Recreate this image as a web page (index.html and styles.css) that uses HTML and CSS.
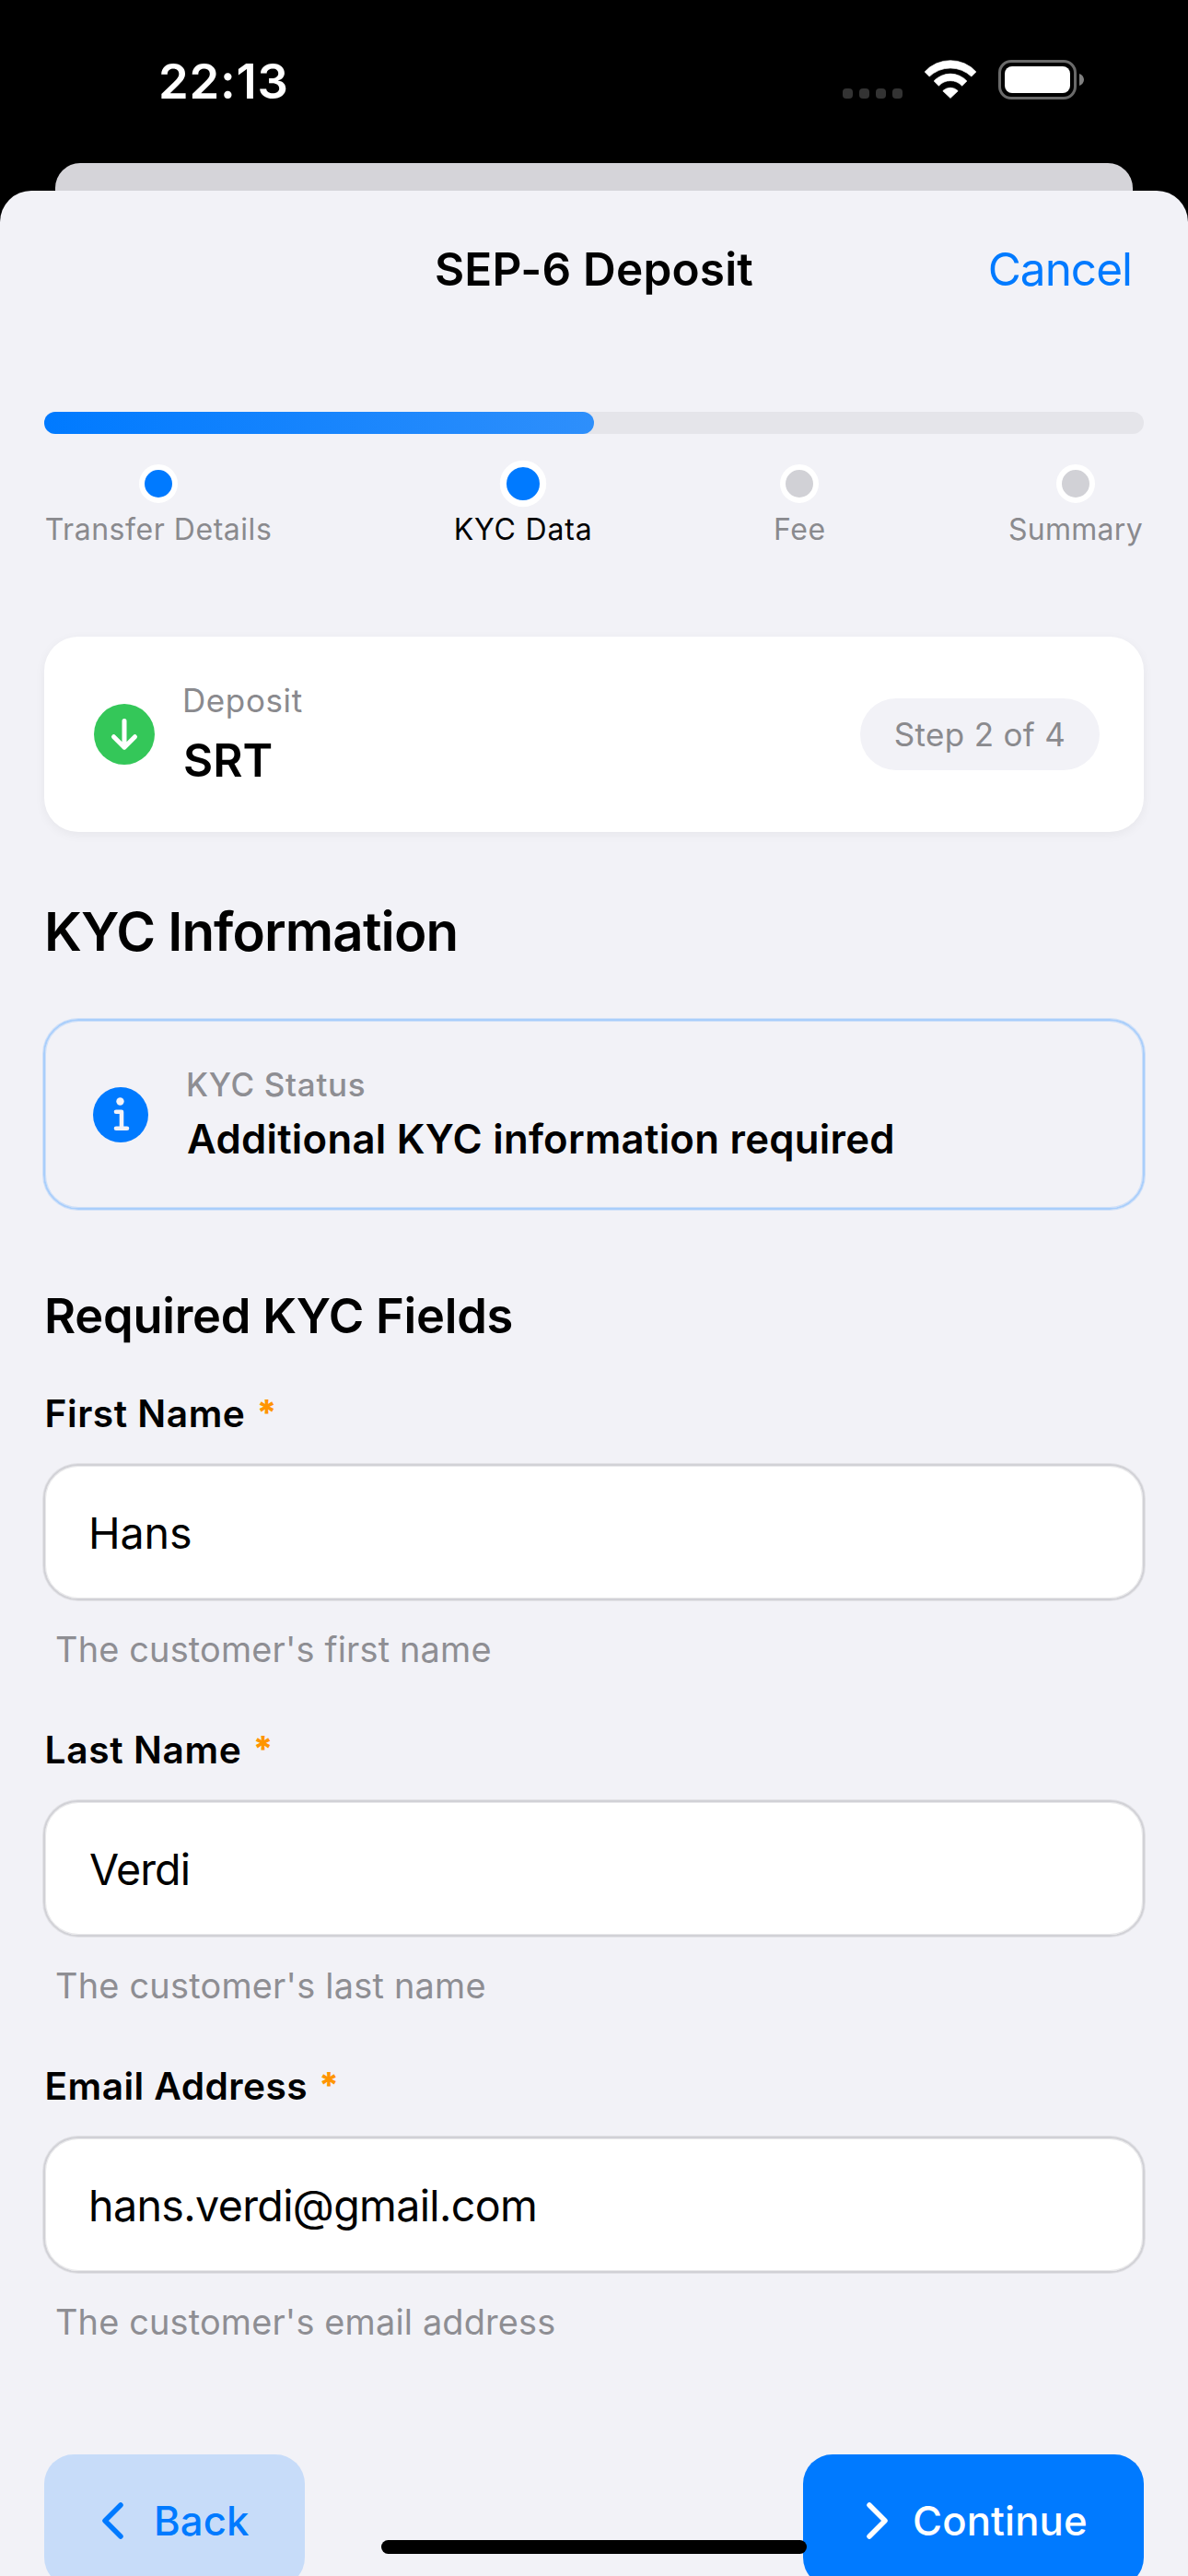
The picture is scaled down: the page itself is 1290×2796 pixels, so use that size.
FILE: index.html
```html
<!DOCTYPE html>
<html lang="en">
<head>
<meta charset="utf-8">
<title>SEP-6 Deposit</title>
<link rel="stylesheet" href="styles.css">
</head>
<body>
<div class="screen">
  <header class="status-bar">
    <span class="time">22:13</span>
    <div class="indicators">
      <div class="signal"><i></i><i></i><i></i><i></i></div>
      <svg class="wifi" viewBox="310 44 175 128" fill="#fff" stroke="#fff" stroke-width="2" stroke-linejoin="round">
        <path d="M312.500 83.500A115 115 0 0 1 482.500 83.500L467 99A101 101 0 0 0 328 99Z"/>
        <path d="M343 114A74 74 0 0 1 452 114L436 130A52 52 0 0 0 359 130Z"/>
        <path d="M372.500 147A34 34 0 0 1 422.500 147L397.500 170.500Z"/>
      </svg>
      <div class="battery">
        <div class="battery-shell"><div class="battery-level"></div></div>
        <svg class="battery-nub" viewBox="0 0 5 13"><path d="M0 0C3 1.200 5 3.500 5 6.500S3 11.800 0 13Z" fill="#808080"/></svg>
      </div>
    </div>
  </header>

  <div class="back-sheet"></div>

  <main class="sheet">
    <nav class="nav">
      <h1 class="nav-title">SEP-6 Deposit</h1>
      <a class="nav-cancel">Cancel</a>
    </nav>

    <div class="content">
      <div class="progress"><div class="progress-fill"></div></div>
      <ol class="steps">
        <li class="step step-details done"><span class="dot"></span><span class="step-label">Transfer Details</span></li>
        <li class="step step-kyc current"><span class="dot"></span><span class="step-label">KYC Data</span></li>
        <li class="step step-fee"><span class="dot"></span><span class="step-label">Fee</span></li>
        <li class="step step-summary"><span class="dot"></span><span class="step-label">Summary</span></li>
      </ol>

      <section class="card">
        <svg class="deposit-icon" viewBox="0 0 66 66">
          <circle cx="33" cy="33" r="33" fill="#34c759"/>
          <path d="M33 18.500V46M21.500 35.700L33 47.200L44.500 35.700" fill="none" stroke="#fff" stroke-width="5" stroke-linecap="round" stroke-linejoin="round"/>
        </svg>
        <div class="card-text">
          <span class="card-kind">Deposit</span>
          <span class="card-asset">SRT</span>
        </div>
        <span class="pill">Step 2 of 4</span>
      </section>

      <h2 class="title">KYC Information</h2>

      <section class="status-box">
        <svg class="info-icon" viewBox="0 0 60 60">
          <circle cx="30" cy="30" r="30" fill="#007aff"/>
          <circle cx="29.500" cy="15.500" r="4.200" fill="#f2f2f7"/>
          <path d="M25 26.800H31V44.500M25 44.700H37" fill="none" stroke="#f2f2f7" stroke-width="4.600" stroke-linecap="round" stroke-linejoin="round"/>
        </svg>
        <div class="status-text">
          <span class="status-caption">KYC Status</span>
          <span class="status-value">Additional KYC information required</span>
        </div>
      </section>

      <h3 class="subtitle">Required KYC Fields</h3>

      <form class="fields">
        <div class="field">
          <label class="label first">First Name<span class="req">*</span></label>
          <div class="input">Hans</div>
          <p class="hint hint-first">The customer's first name</p>
        </div>
        <div class="field">
          <label class="label last">Last Name<span class="req">*</span></label>
          <div class="input verdi">Verdi</div>
          <p class="hint hint-last">The customer's last name</p>
        </div>
        <div class="field">
          <label class="label email">Email Address<span class="req">*</span></label>
          <div class="input mail">hans.verdi@gmail.com</div>
          <p class="hint hint-email">The customer's email address</p>
        </div>
      </form>

      <div class="actions">
        <button class="btn btn-back">
          <svg class="chevron" viewBox="0 0 23 40"><path d="M20 3L3 20L20 37"/></svg>
          <span>Back</span>
        </button>
        <button class="btn btn-continue">
          <svg class="chevron" viewBox="0 0 23 40"><path d="M3 3L20 20L3 37"/></svg>
          <span>Continue</span>
        </button>
      </div>
    </div>
  </main>

  <div class="home-indicator"></div>
</div>
</body>
</html>
```
FILE: styles.css
```css
* { box-sizing: border-box; }

html, body { margin: 0; padding: 0; }

body {
  font-family: Inter, "Liberation Sans", sans-serif;
  color: #000;
  background: #000;
}

h1, h2, h3, p, ol { margin: 0; padding: 0; list-style: none; }

.screen {
  position: relative;
  width: 1290px;
  height: 2796px;
  display: flex;
  flex-direction: column;
  overflow: hidden;
  background: #000;
}

/* Status bar */
.status-bar {
  flex: none;
  height: 177px;
  padding: 0 113px 0 172px;
  display: flex;
  justify-content: space-between;
  align-items: flex-start;
  color: #fff;
}
.time {
  padding-top: 56px;
  font-size: 52.5px;
  line-height: 64px;
  font-weight: 600;
  letter-spacing: 0.8px;
}
.indicators { display: flex; padding-top: 65px; height: 108px; }
.signal { display: flex; gap: 7px; align-self: flex-end; margin: 0 23px 1px 0; }
.signal i { width: 11px; height: 11px; border-radius: 4px; background: #333; }
.wifi { width: 58px; height: 42px; margin-right: 23px; }
.battery { display: flex; align-items: center; gap: 3px; }
.battery-shell {
  width: 85px;
  height: 43px;
  padding: 4px;
  border: 3px solid #6a6a6a;
  border-radius: 14px;
}
.battery-level { height: 29px; border-radius: 8px; background: #fff; }
.battery-nub { width: 5px; height: 13px; }

/* Sheets */
.back-sheet {
  flex: none;
  height: 30px;
  margin: 0 60px;
  border-radius: 27px 27px 0 0;
  background: #d5d4d9;
}
.sheet {
  flex: 1;
  min-height: 0;
  border-radius: 34px 34px 0 0;
  background: #f2f2f7;
}

.nav {
  display: grid;
  grid-template-columns: 1fr auto 1fr;
  align-items: center;
  height: 170px;
  padding: 0 60px;
}
.nav-title {
  grid-column: 2;
  font-size: 49.5px;
  font-weight: 600;
  letter-spacing: 0.2px;
}
.nav-cancel {
  justify-self: end;
  margin-right: 1px;
  font-size: 49.5px;
  letter-spacing: -1px;
  color: #007aff;
}

.content { padding: 70px 48px 0; }

/* Progress */
.progress { height: 24px; border-radius: 12px; background: #e5e5ea; }
.progress-fill {
  width: 50%;
  height: 100%;
  border-radius: 12px;
  background: linear-gradient(90deg, #007aff, #2e8ffb);
}
.steps { display: flex; justify-content: space-between; margin-top: 33px; }
.step {
  display: flex;
  flex-direction: column;
  align-items: center;
  white-space: nowrap;
  font-size: 32px;
  line-height: 39px;
  color: #8a8a8e;
}
.dot {
  width: 42px;
  height: 42px;
  margin-bottom: 9px;
  border: 6px solid #fff;
  border-radius: 50%;
  background: #d1d1d6;
}
.done .dot, .current .dot { background: #007aff; }
.current .dot { transform: scale(1.2); }
.step-details { width: 248px; letter-spacing: 0.54px; }
.step-kyc { width: 149px; letter-spacing: 0.83px; }
.step-fee { width: 56px; letter-spacing: 0.6px; }
.step-summary { width: 148px; letter-spacing: 0.28px; }
.current { color: #000; }

/* Deposit card */
.card {
  display: flex;
  align-items: center;
  height: 212px;
  margin-top: 97px;
  padding: 0 48px 0 54px;
  border-radius: 37px;
  background: #fff;
  box-shadow: 0 3px 12px rgba(0, 0, 0, 0.05);
}
.deposit-icon { width: 66px; height: 66px; margin-right: 30px; }
.card-text { display: flex; flex-direction: column; flex: 1; padding-bottom: 8px; }
.card-kind {
  font-size: 35px;
  line-height: 65px;
  letter-spacing: 0.6px;
  color: #8a8a8e;
}
.card-asset { padding-left: 1px; font-size: 49.5px; line-height: 65px; font-weight: 600; }
.pill {
  width: 260px;
  height: 78px;
  border-radius: 39px;
  background: #f2f2f7;
  text-align: center;
  font-size: 35px;
  line-height: 78px;
  letter-spacing: 0.34px;
  color: #8a8a8e;
}

.title {
  margin-top: 72px;
  font-size: 58.2px;
  line-height: 72px;
  font-weight: 600;
  letter-spacing: -0.87px;
}

/* KYC status */
.status-box {
  display: flex;
  align-items: center;
  height: 207px;
  margin: 59px -1px 0;
  padding: 0 52px;
  border: 2px solid #a9cefb;
  border-radius: 38px;
  box-shadow: 0 0 0 1px rgba(169, 206, 251, 0.5), inset 0 0 0 1px rgba(169, 206, 251, 0.5);
}
.info-icon { width: 60px; height: 60px; margin-right: 41px; }
.status-text { display: flex; flex-direction: column; padding-bottom: 5px; }
.status-caption {
  font-size: 35px;
  line-height: 60px;
  font-weight: 500;
  letter-spacing: 0.67px;
  color: #8e8e93;
}
.status-value {
  padding-left: 1px;
  font-size: 43.7px;
  line-height: 60px;
  font-weight: 600;
  letter-spacing: 0.27px;
}

.subtitle {
  margin-top: 83px;
  font-size: 52.4px;
  line-height: 64px;
  font-weight: 600;
  letter-spacing: -0.26px;
}

/* Form */
.fields { display: flex; flex-direction: column; gap: 61px; margin-top: 50px; }
.label {
  display: block;
  height: 49px;
  padding-left: 0.5px;
  font-size: 40.7px;
  line-height: 49px;
  font-weight: 600;
}
.first { letter-spacing: 0.53px; }
.last { letter-spacing: 0.64px; }
.email { letter-spacing: 0.43px; }
.req {
  margin-left: 12px;
  font-size: 38px;
  font-weight: 800;
  line-height: 0;
  vertical-align: 2px;
  color: #ff9500;
}
.input {
  height: 148px;
  margin: 30px -1px 0;
  padding-left: 47px;
  border: 2px solid #d1d1d6;
  border-radius: 38px;
  background: #fff;
  box-shadow: 0 0 0 1px rgba(209, 209, 214, 0.5), inset 0 0 0 1px rgba(209, 209, 214, 0.5);
  font-size: 46.6px;
  line-height: 146px;
  letter-spacing: -0.1px;
}
.verdi { padding-left: 48px; letter-spacing: -0.88px; }
.mail { letter-spacing: -0.65px; }
.hint {
  margin-top: 30px;
  padding-left: 12px;
  font-size: 37.9px;
  line-height: 47px;
  color: #8e8e93;
}
.hint-first { letter-spacing: 0.17px; }
.hint-last { letter-spacing: 0.22px; }
.hint-email { letter-spacing: 0.16px; }

/* Actions */
.actions { display: flex; justify-content: space-between; margin-top: 120px; }
.btn {
  display: flex;
  align-items: center;
  height: 144px;
  padding: 0 0 0 63px;
  border: 0;
  border-radius: 32px;
  font: 500 43.7px/56px Inter, "Liberation Sans", sans-serif;
}
.btn span { padding-top: 1px; }
.btn-back {
  width: 283px;
  background: #c7dcf9;
  color: #007aff;
  letter-spacing: 0.1px;
}
.btn-continue {
  width: 370px;
  padding-left: 69px;
  background: #007aff;
  color: #fff;
  letter-spacing: 0.12px;
}
.chevron {
  width: 23px;
  height: 40px;
  margin-right: 33px;
  fill: none;
  stroke: currentColor;
  stroke-width: 5.5;
  stroke-linecap: round;
  stroke-linejoin: round;
}
.btn-continue .chevron { margin-right: 27px; }

.home-indicator {
  position: absolute;
  left: 414px;
  top: 2757px;
  width: 462px;
  height: 15px;
  border-radius: 7.5px;
  background: #000;
}
```
